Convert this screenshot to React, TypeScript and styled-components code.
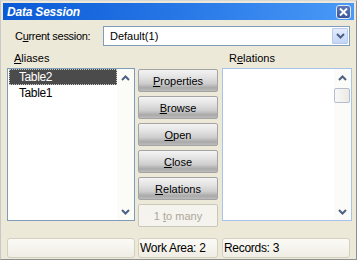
import React from "react";
import styled, { createGlobalStyle } from "styled-components";

const GlobalStyle = createGlobalStyle`
  html, body {
    margin: 0;
    padding: 0;
    background: #ece9d8;
  }
  body {
    font-family: "Liberation Sans", Arial, sans-serif;
    font-size: 11px;
    color: #000;
  }
`;

const Window = styled.div`
  width: 357px;
  height: 260px;
  box-sizing: border-box;
  background: #ece9d8;
  border: 1px solid #8f8f8f;
  border-top-color: #d8d8d8;
  border-left-color: #c8c8c8;
  padding: 2px 2px 0 2px;
  display: flex;
  flex-direction: column;
`;

const TitleBar = styled.div`
  height: 17px;
  display: flex;
  align-items: center;
  justify-content: space-between;
  padding: 0 3px 0 4px;
  background: linear-gradient(90deg, #0a5ad6 0%, #2a7ae8 55%, #4a9af8 100%);
`;

const Title = styled.span`
  color: #fff;
  font-weight: 700;
  font-style: italic;
  font-size: 12px;
  letter-spacing: -0.2px;
`;

const CloseButton = styled.div`
  width: 13px;
  height: 12px;
  border: 1px solid #dfe6f5;
  border-radius: 3px;
  background: linear-gradient(#5f78b8, #3b5599);
  display: flex;
  align-items: center;
  justify-content: center;
`;

const Body = styled.div`
  flex: 1;
  display: flex;
  flex-direction: column;
  padding: 6px 2px 0 4px;
`;

const SessionRow = styled.div`
  display: flex;
  align-items: center;
  height: 20px;
  padding-left: 8px;
`;

const Label = styled.span`
  letter-spacing: -0.3px;
`;

const Combo = styled.div`
  margin-left: auto;
  margin-right: 2px;
  width: 247px;
  height: 20px;
  box-sizing: border-box;
  border: 1px solid #7f9db9;
  background: #fff;
  display: flex;
  align-items: center;
  padding-left: 6px;
`;

const ComboText = styled.span`
  flex: 1;
`;

const DropButton = styled.div`
  width: 16px;
  height: 16px;
  margin-right: 1px;
  box-sizing: border-box;
  border: 1px solid #b6cbef;
  border-radius: 1px;
  background: linear-gradient(#e4ecfc, #c4d5f6);
  display: flex;
  align-items: center;
  justify-content: center;
`;

const Columns = styled.div`
  display: flex;
  gap: 3px;
`;

const Column = styled.div<{ $width: number; $shift?: number }>`
  width: ${(p) => p.$width}px;
  margin-left: ${(p) => p.$shift || 0}px;
  display: flex;
  flex-direction: column;
`;

const Caption = styled.div`
  height: 22px;
  box-sizing: border-box;
  padding: 5px 0 0 7px;
  line-height: 14px;
`;

const ListBox = styled.div<{ $focused?: boolean }>`
  height: 153px;
  box-sizing: border-box;
  border: 1px solid ${(p) => (p.$focused ? "#a7c2ec" : "#7f9db9")};
  background: #fff;
  display: flex;
`;

const Items = styled.div`
  flex: 1;
  padding-left: 1px;
`;

const Item = styled.div<{ $selected?: boolean }>`
  height: 16px;
  line-height: 16px;
  box-sizing: border-box;
  padding-left: 10px;
  font-size: 12px;
  letter-spacing: -0.4px;
  color: ${(p) => (p.$selected ? "#fff" : "#000")};
  background: ${(p) => (p.$selected ? "#4b4b4b" : "transparent")};
  outline: ${(p) => (p.$selected ? "1px dotted #c8c8c8" : "none")};
  outline-offset: -1px;
`;

const ScrollBar = styled.div`
  width: 17px;
  background: #fbfbf8;
  display: flex;
  flex-direction: column;
`;

const ArrowBox = styled.div`
  height: 17px;
  display: flex;
  align-items: center;
  justify-content: center;
`;

const Track = styled.div`
  flex: 1;
  padding-top: 2px;
`;

const Thumb = styled.div`
  width: 16px;
  height: 15px;
  box-sizing: border-box;
  border: 1px solid #b4bdcc;
  border-radius: 2px;
  background: linear-gradient(90deg, #f8f8f8, #eceae2);
`;

const ButtonStack = styled.div`
  display: flex;
  flex-direction: column;
  gap: 4px;
  padding-top: 23px;
`;

const Button = styled.div<{ $disabled?: boolean }>`
  height: 23px;
  box-sizing: border-box;
  border: 1px solid ${(p) => (p.$disabled ? "#cac8bb" : "#a4a4a4")};
  border-radius: 2px;
  display: flex;
  align-items: center;
  justify-content: center;
  font-size: 11px;
  color: ${(p) => (p.$disabled ? "#aca899" : "#000")};
  background: ${(p) =>
    p.$disabled
      ? "#f4f3ee"
      : "linear-gradient(#f4f4f4 0%, #e2e2e2 35%, #cdcdcd 65%, #a9a9a9 85%, #bcbcbc 100%)"};
`;

const StatusBar = styled.div`
  display: flex;
  gap: 3px;
  margin-top: 11px;
`;

const Panel = styled.div<{ $width: number; $shift?: number }>`
  width: ${(p) => p.$width}px;
  margin-left: ${(p) => p.$shift || 0}px;
  height: 20px;
  box-sizing: border-box;
  border: 1px solid #d4d0c0;
  border-radius: 3px;
  background: linear-gradient(#fbfaf6, #efede4);
  display: flex;
  align-items: center;
  padding-left: 1px;
  font-size: 12px;
  letter-spacing: -0.3px;
`;

const Chevron = ({ up }: { up?: boolean }) => (
  <svg width="9" height="6" viewBox="0 0 9 6">
    <polyline
      points={up ? "1,5 4.5,1.5 8,5" : "1,1 4.5,4.5 8,1"}
      fill="none"
      stroke="#4d6185"
      strokeWidth="2"
    />
  </svg>
);

const Scroll = ({ thumb }: { thumb?: boolean }) => (
  <ScrollBar>
    <ArrowBox>
      <Chevron up />
    </ArrowBox>
    <Track>{thumb && <Thumb />}</Track>
    <ArrowBox>
      <Chevron />
    </ArrowBox>
  </ScrollBar>
);

const buttons: [string, string, boolean?][] = [
  ["P", "roperties"],
  ["B", "rowse"],
  ["O", "pen"],
  ["C", "lose"],
  ["R", "elations"],
];

export default function App() {
  return (
    <>
      <GlobalStyle />
      <Window>
        <TitleBar>
          <Title>Data Session</Title>
          <CloseButton>
            <svg width="9" height="8" viewBox="0 0 9 8">
              <path d="M1 0.5 L8 7.5 M8 0.5 L1 7.5" stroke="#fff" strokeWidth="2" />
            </svg>
          </CloseButton>
        </TitleBar>
        <Body>
          <SessionRow>
            <Label>
              C<u>u</u>rrent session:
            </Label>
            <Combo>
              <ComboText>Default(1)</ComboText>
              <DropButton>
                <Chevron />
              </DropButton>
            </Combo>
          </SessionRow>
          <Columns>
            <Column $width={128}>
              <Caption>
                <u>A</u>liases
              </Caption>
              <ListBox>
                <Items>
                  <Item $selected>Table2</Item>
                  <Item>Table1</Item>
                </Items>
                <Scroll />
              </ListBox>
            </Column>
            <Column $width={80}>
              <ButtonStack>
                {buttons.map(([key, rest]) => (
                  <Button key={key}>
                    <u>{key}</u>
                    {rest}
                  </Button>
                ))}
                <Button $disabled>
                  1&nbsp;<u>t</u>o many
                </Button>
              </ButtonStack>
            </Column>
            <Column $width={130} $shift={1}>
              <Caption>
                R<u>e</u>lations
              </Caption>
              <ListBox $focused>
                <Items />
                <Scroll thumb />
              </ListBox>
            </Column>
          </Columns>
          <StatusBar>
            <Panel $width={128} />
            <Panel $width={80}>Work Area: 2</Panel>
            <Panel $width={128} $shift={1}>Records: 3</Panel>
          </StatusBar>
        </Body>
      </Window>
    </>
  );
}
